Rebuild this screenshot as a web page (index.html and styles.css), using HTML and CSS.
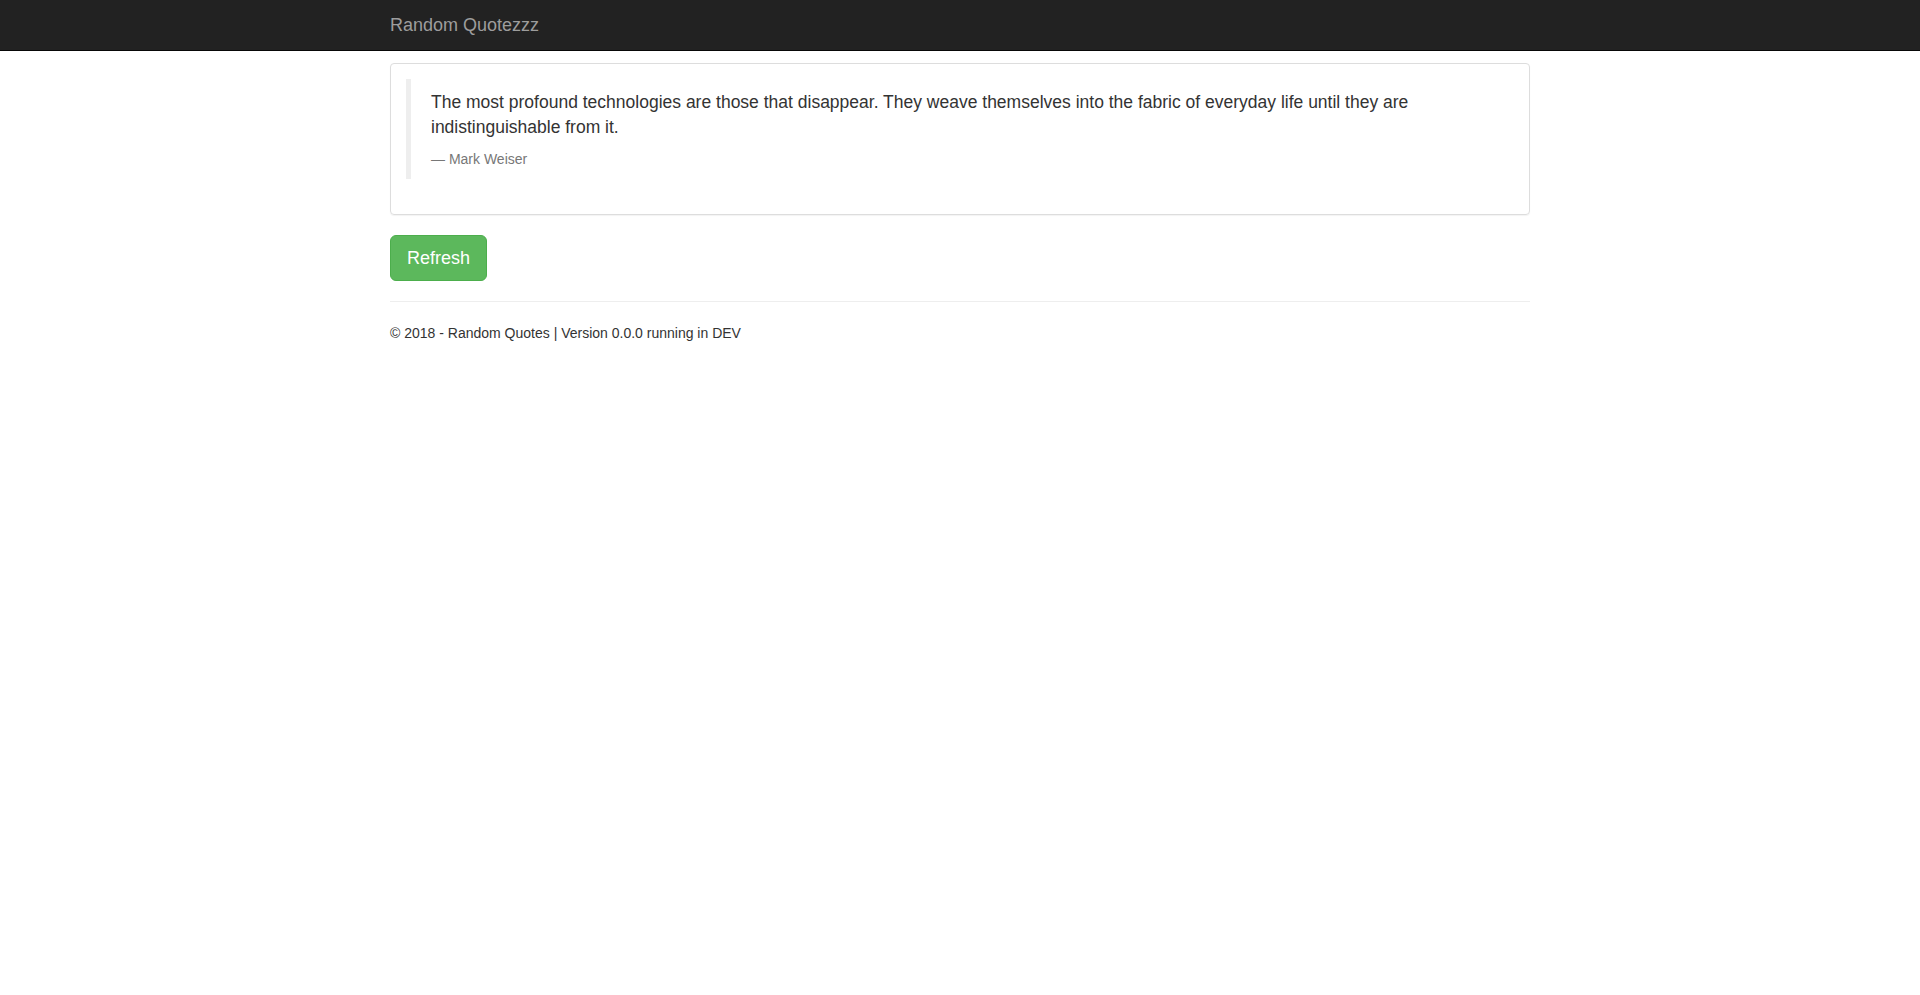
FILE: index.html
```html
<!DOCTYPE html>
<html lang="en">
<head>
    <meta charset="UTF-8">
    <meta name="viewport" content="width=device-width, initial-scale=1.0">
    <title>Random Quotezzz</title>
    <link rel="stylesheet" href="styles.css">
</head>
<body>
    <nav class="navbar">
        <div class="container">
            <a class="brand" href="#">Random Quotezzz</a>
        </div>
    </nav>

    <div class="container body-content">
        <div class="panel">
            <div class="panel-body">
                <blockquote>
                    <p>The most profound technologies are those that disappear. They weave themselves into the fabric of everyday life until they are indistinguishable from it.</p>
                    <footer>Mark Weiser</footer>
                </blockquote>
            </div>
        </div>
        <button class="btn-refresh">Refresh</button>
        <hr>
        <footer class="page-footer">
            <p>&copy; 2018 - Random Quotes | Version 0.0.0 running in DEV</p>
        </footer>
    </div>
</body>
</html>
```

FILE: styles.css
```css
* { box-sizing: border-box; }
body { margin: 0; font-family: "Liberation Sans", Arial, sans-serif; font-size: 14px; line-height: 1.42857; color: #333; background: #fff; }
.container { width: 1170px; margin: 0 auto; padding: 0 15px; }
.navbar { background: #222; border-bottom: 1px solid #080808; height: 51px; }
.brand { display: block; height: 50px; padding: 15px 0; font-size: 18px; line-height: 20px; color: #9d9d9d; text-decoration: none; }
.body-content { padding-top: 12px; }
.panel { border: 1px solid #ddd; border-radius: 4px; margin-bottom: 20px; box-shadow: 0 1px 1px rgba(0,0,0,.05); }
.panel-body { padding: 15px; }
blockquote { margin: 0 0 20px; padding: 11px 20px 9px; border-left: 5px solid #eee; font-size: 17.5px; }
blockquote p { margin: 0 0 10px; }
blockquote footer { font-size: 80%; line-height: 1.42857; color: #777; }
blockquote footer:before { content: "\2014 \00A0"; }
.btn-refresh { display: block; padding: 11px 16px 9px; font-family: inherit; font-size: 18px; line-height: 1.3333; color: #fff; background: #5cb85c; border: 1px solid #4cae4c; border-radius: 6px; cursor: pointer; }
hr { margin: 20px 0; border: 0; border-top: 1px solid #eee; }
.page-footer p { margin: 0 0 10px; padding-top: 2px; }
```
